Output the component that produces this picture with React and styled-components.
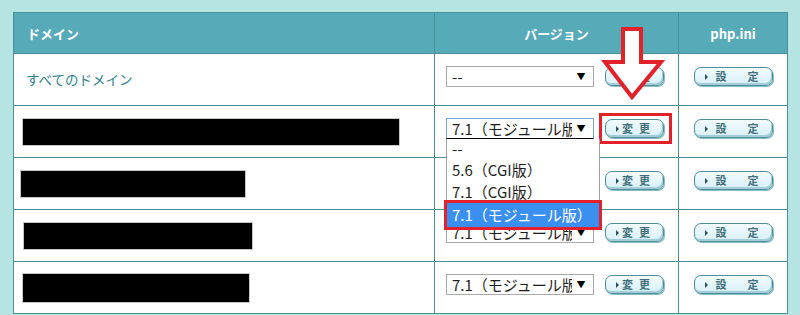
import React from 'react';
import styled, { createGlobalStyle, css } from 'styled-components';

const GlobalStyle = createGlobalStyle`
  html, body {
    margin: 0;
    padding: 0;
    background: #b5e4e3;
  }
  body {
    font-family: "Noto Sans CJK JP", "Noto Sans", sans-serif;
  }
`;

const Page = styled.div`
  position: relative;
  width: 800px;
  height: 315px;
  overflow: hidden;
  padding: 12px 0 0 13px;
  box-sizing: border-box;
`;

const Table = styled.div`
  width: 775px;
  border-left: 1px solid #4b8f98;
  border-top: 1px solid #4b8f98;
  box-sizing: border-box;
`;

const Row = styled.div`
  display: grid;
  grid-template-columns: 421px 244px 109px;
  height: ${p => (p.head ? 41 : 52)}px;
  background: ${p => (p.head ? '#57aab7' : '#fff')};
`;

const Cell = styled.div`
  display: flex;
  align-items: ${p => (p.top ? 'flex-start' : 'center')};
  justify-content: ${p => p.justify || 'flex-start'};
  padding: ${p => (p.top ? `${p.top}px 0 0 ${p.indent ?? 11}px` : `0 0 0 ${p.indent ?? 12}px`)};
  border-right: 1px solid #4b8f98;
  border-bottom: 1px solid #4b8f98;
  box-sizing: border-box;
  min-width: 0;
`;

const HeadText = styled.span`
  font-size: 13px;
  font-weight: bold;
  color: #fff;
  line-height: 1;
`;

const DomainLink = styled.span`
  font-size: 13.5px;
  color: #2f7f8c;
  line-height: 1;
`;

const Redacted = styled.div`
  width: ${p => p.w}px;
  height: ${p => p.h || 26}px;
  margin-left: ${p => p.x}px;
  background: #000;
  box-shadow: 0 0 0 1px #c8c8c8;
`;

const Controls = styled.div`
  display: flex;
  align-items: center;
  gap: 11px;
  height: 21px;
`;

const SelectWrap = styled.div`
  position: relative;
  width: 148px;
  height: 21px;
`;

const SelectBox = styled.div`
  display: flex;
  align-items: center;
  width: 100%;
  height: 100%;
  box-sizing: border-box;
  border: 1px solid #a9a9a9;
  background: #fff;
  padding-left: 5px;
  font-size: 15px;
  color: #1e1e1e;
  ${p =>
    p.open &&
    css`
      border-color: #7da2c9;
      border-bottom: 1px solid #000;
    `}
`;

const SelectText = styled.span`
  flex: 1;
  overflow: hidden;
  white-space: nowrap;
  line-height: 19px;
`;

const Caret = styled.span`
  width: 21px;
  padding-right: 3px;
  box-sizing: border-box;
  text-align: center;
  font-size: 9px;
  color: #000;
`;

const DropList = styled.div`
  position: absolute;
  left: 0;
  top: 21px;
  width: 154px;
  background: #fff;
  border: 1px solid #a0a0a0;
  border-top: none;
  box-sizing: border-box;
  z-index: 2;
`;

const Option = styled.div`
  height: ${p => (p.short ? 20 : 22)}px;
  line-height: ${p => (p.short ? 20 : 22)}px;
  padding-left: 5px;
  font-size: 15px;
  white-space: nowrap;
  color: ${p => (p.selected ? '#fff' : '#1e1e1e')};
  background: ${p => (p.selected ? '#3b8ff0' : 'transparent')};
  ${p =>
    p.selected &&
    css`
      height: 24px;
      line-height: 24px;
      outline: 3px solid #e2212b;
      outline-offset: 0;
    `}
`;

const Marker = styled.div`
  display: flex;
  padding: ${p => (p.on ? '3px 5px 3px 3px' : 0)};
  margin: ${p => (p.on ? '-6px -8px -6px -6px' : 0)};
  border: ${p => (p.on ? '3px solid #e2212b' : 'none')};
`;

const Btn = styled.div`
  display: flex;
  align-items: center;
  width: ${p => p.w}px;
  height: 19px;
  box-sizing: border-box;
  padding: 0 ${p => p.right}px 0 10px;
  border: 1px solid #4d8e9b;
  border-radius: 7px;
  background: linear-gradient(#f3fbfd, #d6eff6);
  box-shadow: inset -1px -2px 0 #a3cdd7, 1px 1px 0 #8cbcc7;
  font-size: 11px;
  font-weight: bold;
  color: #3d6e79;
  line-height: 1;
  white-space: nowrap;
`;

const Tri = styled.span`
  flex: none;
  width: 0;
  height: 0;
  border-top: 3px solid transparent;
  border-bottom: 3px solid transparent;
  border-left: 3px solid #2e4f57;
`;

const Glyph = styled.span`
  margin-left: ${p => (p.auto ? 'auto' : `${p.gap}px`)};
`;

const ArrowMark = styled.svg`
  position: absolute;
  left: 0;
  top: 0;
  pointer-events: none;
  z-index: 3;
`;

const ChangeBtn = ({ marked }) => (
  <Marker on={marked}>
    <Btn w={59} right={10}>
      <Tri />
      <Glyph gap={3}>変</Glyph>
      <Glyph gap={6}>更</Glyph>
    </Btn>
  </Marker>
);

const SetBtn = () => (
  <Btn w={79} right={13}>
    <Tri />
    <Glyph gap={8}>設</Glyph>
    <Glyph auto>定</Glyph>
  </Btn>
);

const VERSION = '7.1（モジュール版）';

const Version = ({ value, open }) => (
  <Cell top={12}>
    <Controls>
      <SelectWrap>
        <SelectBox open={open}>
          <SelectText>{value}</SelectText>
          <Caret>▼</Caret>
        </SelectBox>
        {open && (
          <DropList>
            <Option short>--</Option>
            <Option>5.6（CGI版）</Option>
            <Option>7.1（CGI版）</Option>
            <Option selected>{VERSION}</Option>
          </DropList>
        )}
      </SelectWrap>
      <ChangeBtn marked={open} />
    </Controls>
  </Cell>
);

const Ini = () => (
  <Cell top={13} indent={0} justify="center">
    <SetBtn />
  </Cell>
);

const rows = [
  { bar: { x: 9, w: 376 }, open: true },
  { bar: { x: 7, w: 224 } },
  { bar: { x: 10, w: 228 } },
  { bar: { x: 9, w: 226, h: 28 } },
];

export default function App() {
  return (
    <>
      <GlobalStyle />
      <Page>
        <Table>
          <Row head>
            <Cell indent={13}>
              <HeadText>ドメイン</HeadText>
            </Cell>
            <Cell justify="center" indent={0}>
              <HeadText>バージョン</HeadText>
            </Cell>
            <Cell justify="center" indent={0}>
              <HeadText>php.ini</HeadText>
            </Cell>
          </Row>
          <Row>
            <Cell indent={12}>
              <DomainLink>すべてのドメイン</DomainLink>
            </Cell>
            <Version value="--" />
            <Ini />
          </Row>
          {rows.map((r, i) => (
            <Row key={i}>
              <Cell indent={0}>
                <Redacted x={r.bar.x} w={r.bar.w} h={r.bar.h} />
              </Cell>
              <Version value={VERSION} open={r.open} />
              <Ini />
            </Row>
          ))}
        </Table>
        <ArrowMark width="800" height="315" viewBox="0 0 800 315">
          <path
            d="M623 29 H641 V62 H661 L632 97 L605 62 H623 Z"
            fill="#fff"
            stroke="#e2212b"
            strokeWidth="4"
            strokeLinejoin="miter"
          />
        </ArrowMark>
      </Page>
    </>
  );
}
